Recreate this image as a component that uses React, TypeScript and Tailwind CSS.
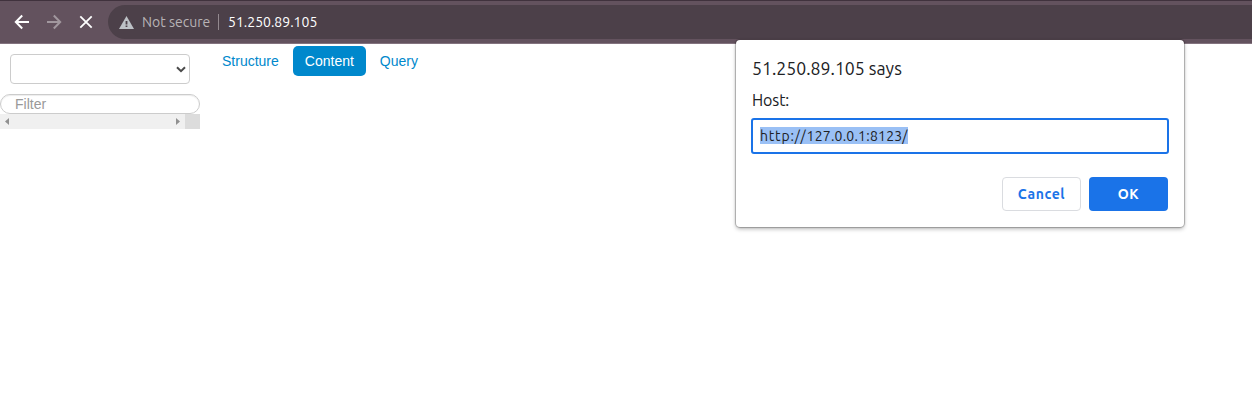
import React from "react";

const ubuntu = "font-['Ubuntu','Noto_Sans',sans-serif]";

function Toolbar() {
  return (
    <header className={`flex h-11 items-center border-t border-b border-t-[#40323d] border-b-[#83737f] bg-[#63525e] pl-3.5 ${ubuntu}`}>
      <svg className="h-4 w-4 shrink-0" viewBox="0 0 16 16" fill="none" stroke="#fff" strokeWidth="2">
        <path d="M15 8H2M8.2 1.5 1.8 8l6.4 6.5" />
      </svg>
      <svg className="ml-4 h-4 w-4 shrink-0" viewBox="0 0 16 16" fill="none" stroke="#a1979e" strokeWidth="2">
        <path d="M1 8h13M7.8 1.5 14.2 8l-6.4 6.5" />
      </svg>
      <svg className="ml-4 h-4 w-4 shrink-0" viewBox="0 0 16 16" fill="none" stroke="#fff" strokeWidth="1.8">
        <path d="m2.3 2.3 11.4 11.4M13.7 2.3 2.3 13.7" />
      </svg>
      <div className="ml-3.5 flex h-[34px] flex-1 items-center rounded-l-full bg-[#4c4049] pl-[11px] text-sm">
        <svg className="h-[13px] w-[15px] shrink-0" viewBox="0 0 15 13">
          <path d="M7.5 0 15 13H0Z" fill="#bdc1c6" />
          <path d="M6.6 5h1.8v3.5H6.6ZM6.6 9.5h1.8v1.6H6.6Z" fill="#4c4049" />
        </svg>
        <span className="ml-2 w-[69px] whitespace-nowrap text-[#b8b3b6]">Not secure</span>
        <span className="ml-[7px] h-4 w-px bg-[#93898f]" />
        <span className="ml-[9px] whitespace-nowrap text-white">51.250.89.105</span>
      </div>
    </header>
  );
}

function Sidebar() {
  return (
    <aside className="w-[200px] pt-2.5">
      <div className="mx-2.5 flex h-[30px] items-center justify-end rounded border border-[#ccc] bg-white pr-[3px]">
        <svg className="h-[7px] w-[10px]" viewBox="0 0 10 7" fill="none" stroke="#4a4a4a" strokeWidth="2">
          <path d="m1 1.2 4 4 4-4" />
        </svg>
      </div>
      <div className="mt-2.5 flex h-5 items-center rounded-full border border-[#ccc] pl-3.5 text-sm text-[#999] shadow-[inset_0_1px_1px_rgba(0,0,0,0.075)]">
        Filter
      </div>
      <div className="flex h-[15px] bg-[#f0f0f0]">
        <div className="flex flex-1 items-center justify-between pr-[5px] pl-[5px]">
          <svg className="h-[7px] w-1" viewBox="0 0 4 7"><path d="M4 0v7L0 3.5Z" fill="#909090" /></svg>
          <svg className="h-[7px] w-1" viewBox="0 0 4 7"><path d="M0 0v7l4-3.5Z" fill="#909090" /></svg>
        </div>
        <div className="w-[15px] bg-[#dcdcdc]" />
      </div>
    </aside>
  );
}

function HostDialog() {
  return (
    <div
      role="dialog"
      className={`absolute top-10 left-[736px] h-[187px] w-[448px] rounded bg-white px-4 text-[#202124] shadow-[0_0_1px_1px_rgba(0,0,0,0.25),0_2px_4px_rgba(0,0,0,0.28)] ${ubuntu}`}
    >
      <h1 className="pt-[17px] text-[17.7px] leading-6 whitespace-nowrap">51.250.89.105 says</h1>
      <p className="mt-2 text-base leading-[22px] tracking-[-0.1px]">Host:</p>
      <div className="-mx-px mt-[7px] flex h-9 items-center rounded-[3px] border-2 border-[#1a73e8] pl-[7px] text-sm">
        <span className="-mt-px h-[17px] bg-[#9ac0f5] leading-[19px] tracking-[0.22px] whitespace-nowrap">
          <span className="tracking-[0.8px]">http://</span>127.0.0.1:8123/
        </span>
      </div>
      <div className="mt-[23px] flex justify-end gap-2 text-sm font-semibold tracking-[0.6px]">
        <button className="h-[34px] w-[79px] rounded border border-[#dadce0] text-[#1a73e8]">Cancel</button>
        <button className="h-[34px] w-[79px] rounded bg-[#1a73e8] text-white">OK</button>
      </div>
    </div>
  );
}

export default function App() {
  return (
    <div className="relative h-[405px] w-[1252px] overflow-hidden bg-white font-['Liberation_Sans',Arial,sans-serif]">
      <Toolbar />
      <main className="flex">
        <Sidebar />
        <nav className="ml-2.5 flex h-[30px] gap-0.5 pt-0.5 text-sm leading-[30px] text-[#08c]">
          <a className="h-[30px] px-3">Structure</a>
          <a className="h-[30px] rounded-[5px] bg-[#08c] px-3 text-white">Content</a>
          <a className="h-[30px] px-3">Query</a>
        </nav>
      </main>
      <HostDialog />
    </div>
  );
}
